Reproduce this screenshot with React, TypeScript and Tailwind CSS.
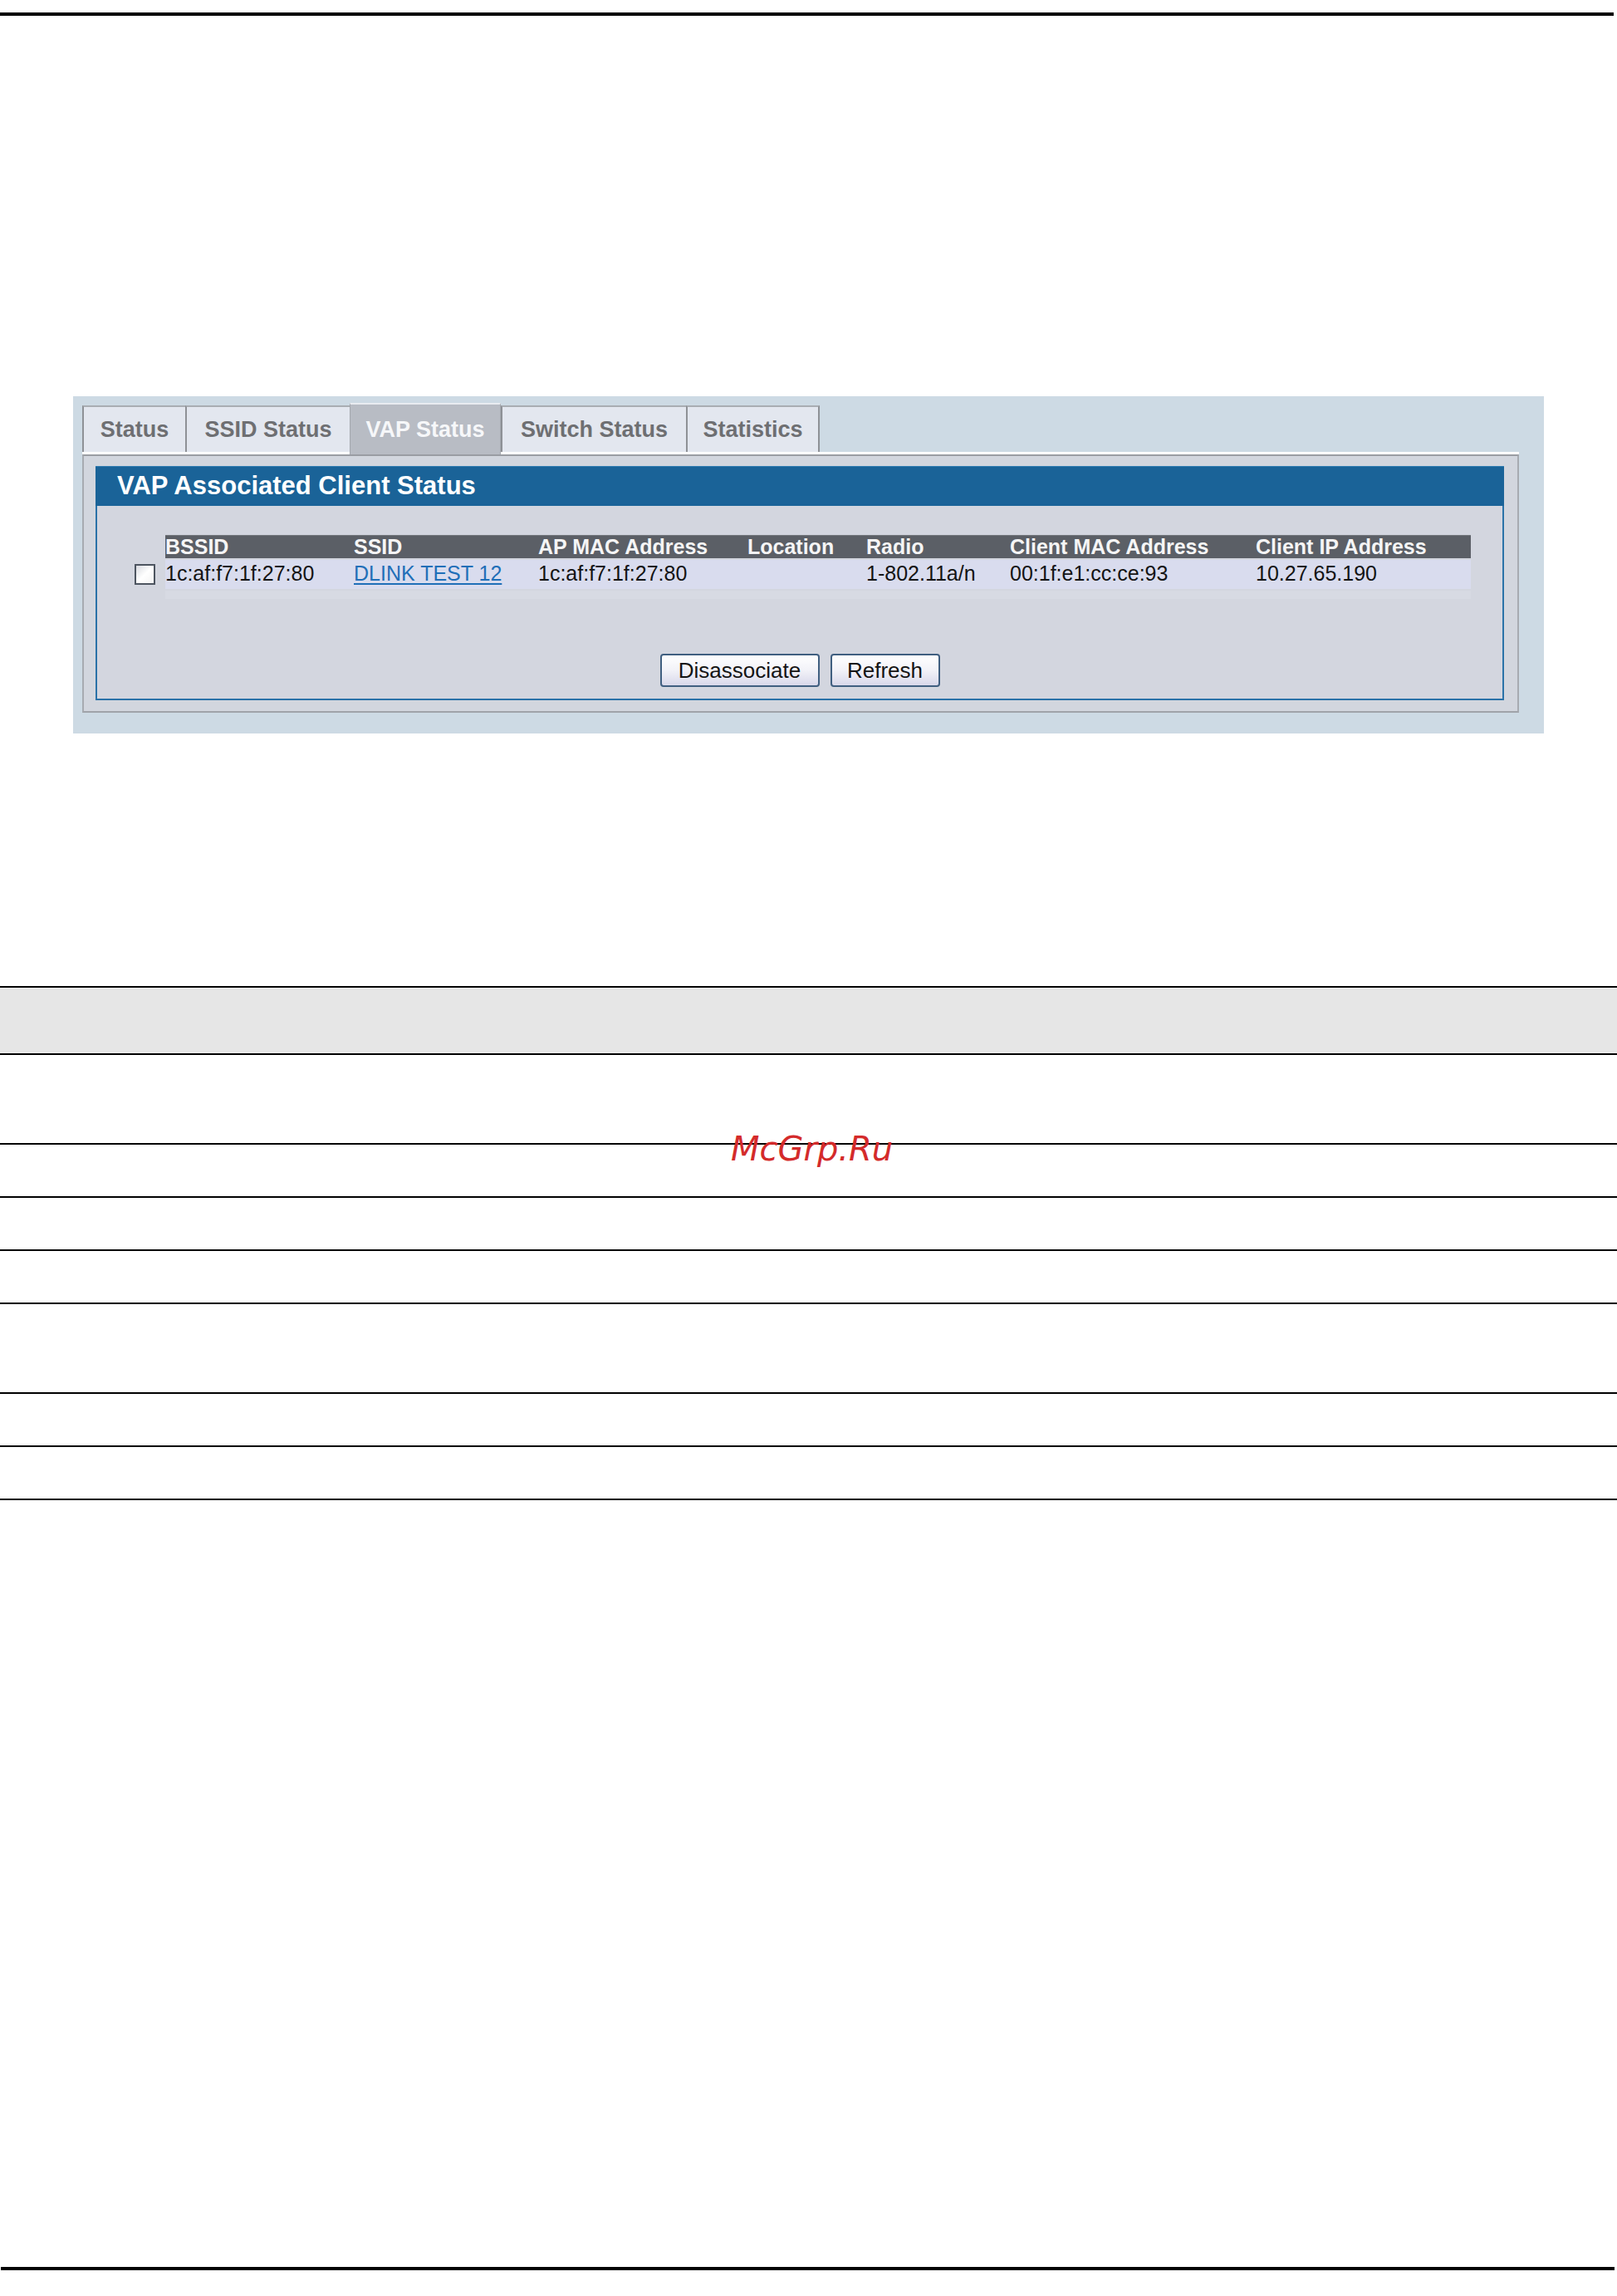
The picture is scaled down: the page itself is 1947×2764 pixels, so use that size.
import React from 'react';

const ui = { fontFamily: '"Liberation Sans", Arial, sans-serif' };

const tabs = ['Status', 'SSID Status', 'VAP Status', 'Switch Status', 'Statistics'];
const tabWidths = ['w-[124px]', 'w-[198px]', 'w-[182px]', 'w-[223px]', 'w-[161px]'];

const columns = [
  'BSSID',
  'SSID',
  'AP MAC Address',
  'Location',
  'Radio',
  'Client MAC Address',
  'Client IP Address',
];

function Tabs() {
  return (
    <div className="flex items-end h-[58px]">
      {tabs.map((t, i) => {
        const active = t === 'VAP Status';
        return (
          <div
            key={t}
            className={
              active
                ? `${tabWidths[i]} h-[62px] -mb-[3px] relative z-10 flex items-center justify-center bg-[#b8bcc4] border-t-2 border-x border-t-[#e8ebf0] border-x-[#a4a8ae] text-[#f6f7f9] text-[27px] font-bold`
                : `${tabWidths[i]} h-[56px] flex items-center justify-center bg-[#e3e7ef] border-t-2 border-t-[#a9adb3] border-l-2 border-l-[#8e9196] ${
                    i === tabs.length - 1 ? 'border-r-2 border-r-[#8e9196]' : ''
                  } text-[#6e6f72] text-[27px] font-bold`
            }
          >
            {t}
          </div>
        );
      })}
    </div>
  );
}

function ClientTable() {
  return (
    <div className="flex flex-col gap-[2px]">
      <div className="flex">
        <div className="w-[82px]" />
        <div className="w-[1572px] h-[28px] bg-[#5b5f66] border-t border-[#73777d] grid grid-cols-[227px_222px_252px_143px_173px_296px_1fr] text-[25px] leading-[27px] font-bold text-[#f5f5f5]">
          {columns.map((c) => (
            <div key={c} className="whitespace-nowrap">
              {c}
            </div>
          ))}
        </div>
      </div>
      <div className="flex">
        <div className="w-[82px] pl-[45px] flex items-center">
          <div className="w-[25px] h-[25px] border-2 border-[#4d5560] bg-gradient-to-br from-[#d9dbe0] via-white to-[#f3f3f3]" />
        </div>
        <div className="w-[1572px] h-[35px] bg-[#d9dcee] grid grid-cols-[227px_222px_252px_143px_173px_296px_1fr] text-[25px] leading-[32px] text-[#141414]">
          <div className="whitespace-nowrap">1c:af:f7:1f:27:80</div>
          <div className="whitespace-nowrap">
            <span className="text-[#1f6fb8] underline underline-offset-[3px]">DLINK TEST 12</span>
          </div>
          <div className="whitespace-nowrap">1c:af:f7:1f:27:80</div>
          <div />
          <div className="whitespace-nowrap">1-802.11a/n</div>
          <div className="whitespace-nowrap">00:1f:e1:cc:ce:93</div>
          <div className="whitespace-nowrap">10.27.65.190</div>
        </div>
      </div>
      <div className="flex">
        <div className="w-[82px]" />
        <div className="w-[1572px] h-[10px] bg-[#d7dae3]" />
      </div>
    </div>
  );
}

function Button({ label, width }: { label: string; width: string }) {
  return (
    <button
      className={`${width} h-[40px] rounded-[4px] border-2 border-[#405f80] bg-gradient-to-b from-white via-[#f2f2f8] to-[#d8d8ea] text-[26px] leading-none text-[#141414] flex items-center justify-center`}
    >
      {label}
    </button>
  );
}

function Screenshot() {
  return (
    <div style={ui} className="ml-[88px] mt-[458px] w-[1771px] h-[406px] bg-[#cddae4] pt-[9px] pl-[11px]">
      <Tabs />
      <div className="w-[1730px] border-t-[3px] border-white">
        <div className="h-[311px] border-2 border-t-[#9a9da3] border-x-[#a7abb1] border-b-[#9fa3a9] bg-[#d2d6de] pt-[12px] pl-[14px]">
          <div className="w-[1696px] h-[282px] flex flex-col">
            <div className="h-[48px] bg-[#1a6398] border-t border-[#2d7ab0] flex items-center pl-[26px] text-white text-[31px] font-bold">
              VAP Associated Client Status
            </div>
            <div className="flex-1 border-x-2 border-b-2 border-[#2a72a8] bg-[#d3d6df] pt-[35px]">
              <ClientTable />
              <div className="mt-[66px] flex justify-center gap-[13px]">
                <Button label="Disassociate" width="w-[192px]" />
                <Button label="Refresh" width="w-[132px]" />
              </div>
            </div>
          </div>
        </div>
      </div>
    </div>
  );
}

function RuledTable() {
  // heights include the 2px bottom rule (border-box)
  const rows = ['h-[108px]', 'h-[64px]', 'h-[64px]', 'h-[64px]', 'h-[108px]', 'h-[64px]', 'h-[64px]'];
  return (
    <div className="mt-[304px] w-full border-t-2 border-black">
      <div className="h-[81px] bg-[#e6e6e6] border-b-2 border-black" />
      {rows.map((h, i) => (
        <div key={i} className={`${h} border-b-2 border-black`} />
      ))}
    </div>
  );
}

export default function App() {
  return (
    <div className="relative w-[1947px] h-[2764px] bg-white overflow-hidden">
      <div className="pt-[15px]">
        <div className="w-[1943px] h-[4px] bg-black" />
      </div>
      <Screenshot />
      <RuledTable />
      <div className="mt-[923px] w-[1943px] h-[4px] bg-black ml-[1px]" />
      <div
        style={{ fontFamily: '"DejaVu Sans", sans-serif' }}
        className="absolute left-[880px] top-[1363px] text-[40px] leading-none italic text-[#d42b2b]"
      >
        McGrp.Ru
      </div>
    </div>
  );
}
